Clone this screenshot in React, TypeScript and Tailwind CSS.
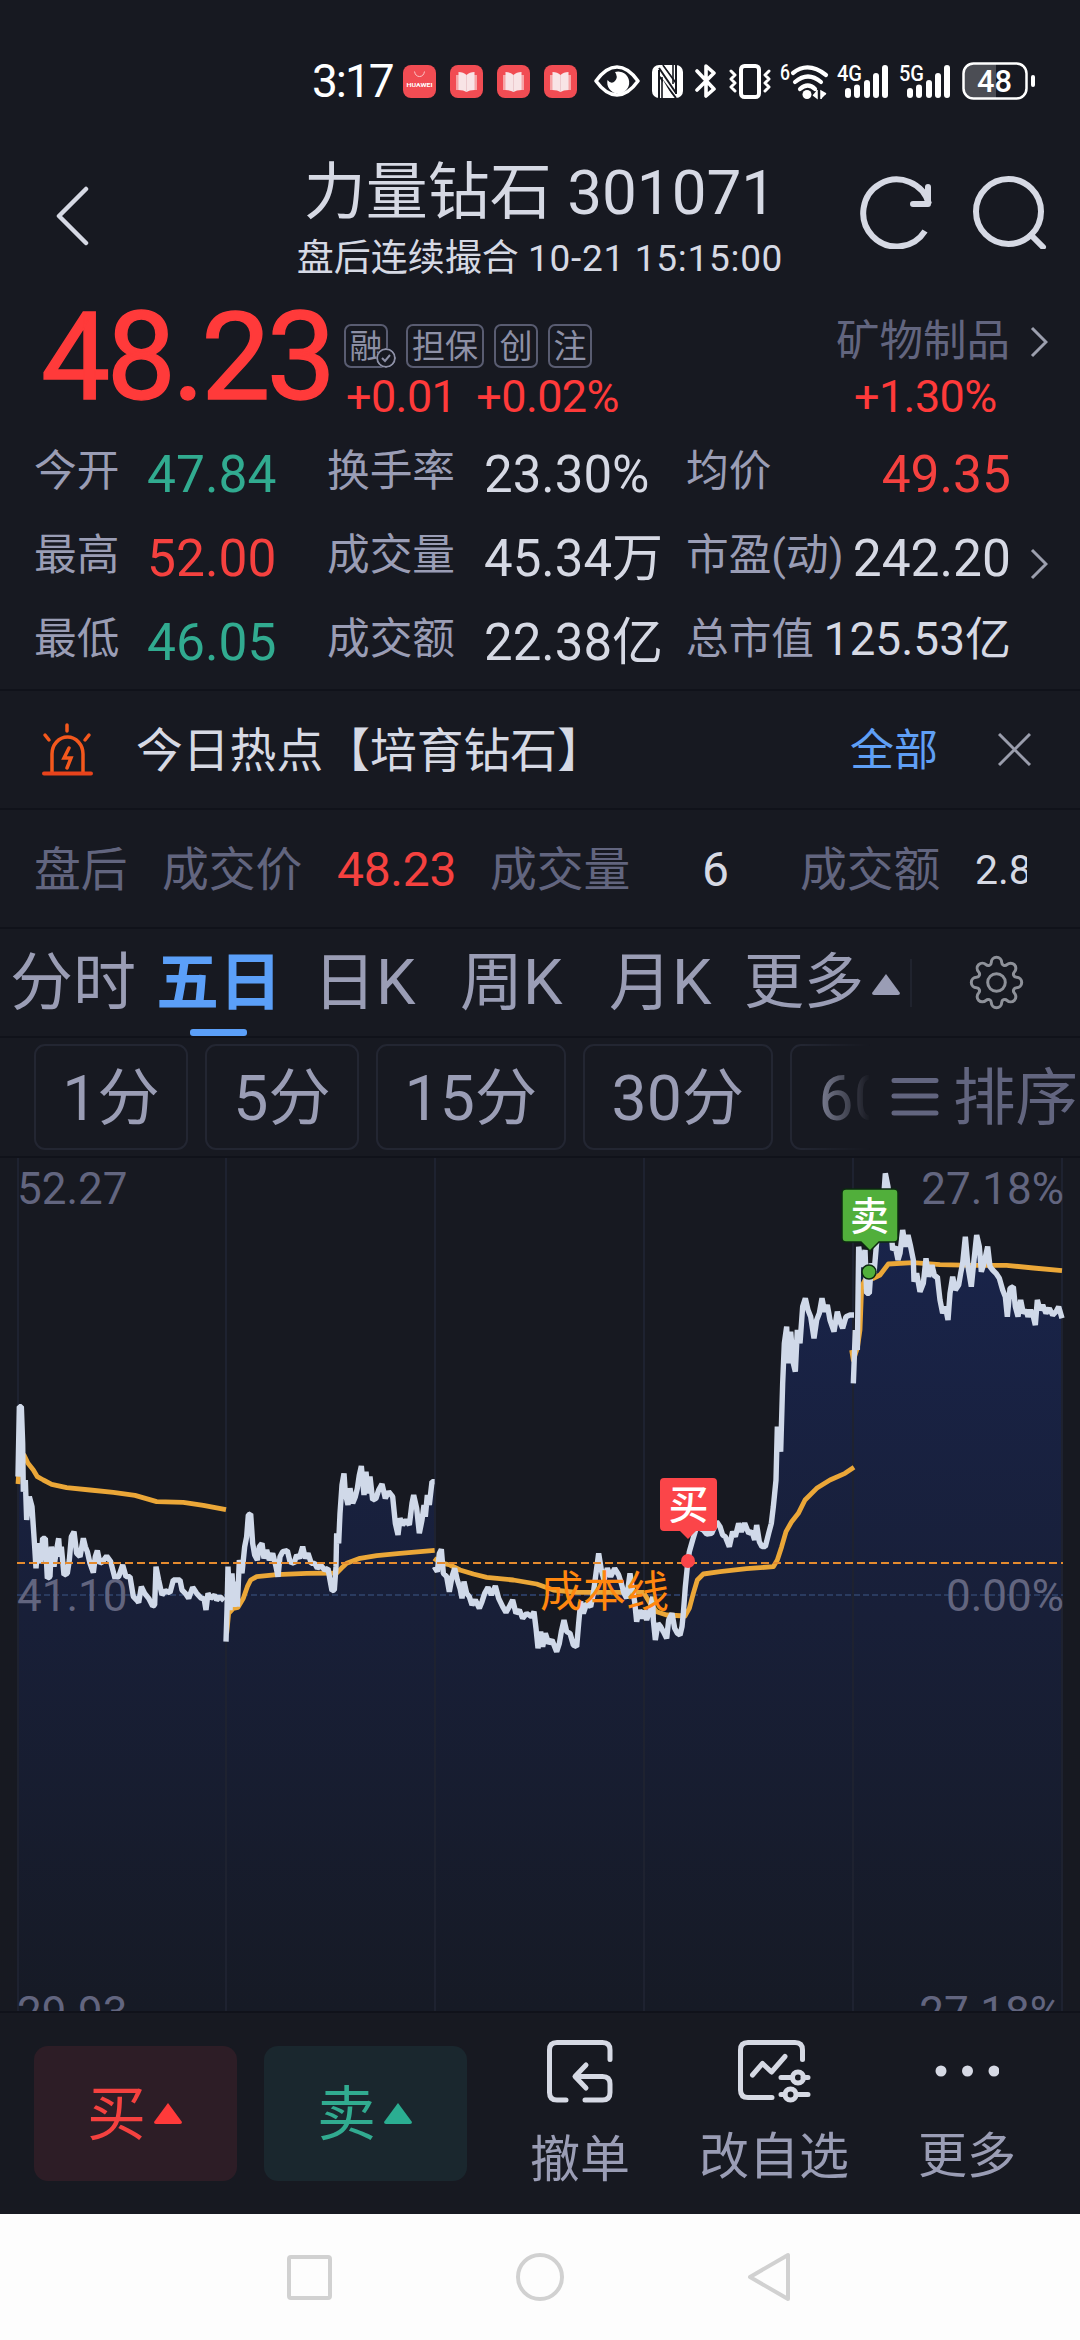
import { useState } from 'react';

type Session = { ox: number; oy: number; price: string; avg: string };

// five trading days, every pair is x,y in thirds of a pixel from the session origin
const sessions: Session[] = [
  {
    ox: 0,
    oy: 222,
    price:
      '54,290 58,80 64,80 68,190 70,335 76,300 80,420 88,350 96,380 104,500 108,565 114,490 122,550 128,475 136,475 142,595 150,590 154,500 162,560 168,520 176,475 180,530 184,500 192,585 202,580 208,540 214,470 222,455 230,520 240,530 250,475 256,500 262,515 270,550 280,578 286,530 292,512 300,550 308,545 320,528 332,545 345,595 356,590 368,555 378,590 390,590 400,650 410,660 416,668 424,620 434,640 446,655 458,678 464,675 468,560 476,600 486,645 496,632 510,638 520,600 532,600 540,600 546,630 556,640 566,655 578,622 590,640 604,655 612,655 618,690 624,640 632,655 644,645 650,660 660,650 672,662',
    avg: '54,312 60,222 72,225 84,250 100,270 112,290 130,300 155,313 200,323 270,330 340,337 405,346 470,365 550,367 610,376 678,389',
  },
  {
    ox: 0,
    oy: 222,
    price:
      '678,785 681,690 684,560 690,690 696,580 702,680 708,605 712,680 718,540 726,580 734,500 740,470 745,405 752,402 758,490 764,525 772,540 778,500 786,490 792,535 800,510 808,540 818,520 828,560 834,590 840,530 848,515 862,512 870,545 882,550 890,525 898,535 908,500 916,535 924,520 934,550 944,550 952,565 962,555 974,570 984,565 990,600 996,632 1003,630 1008,560 1010,460 1016,490 1020,400 1026,315 1032,280 1036,340 1044,375 1050,325 1058,370 1066,350 1072,325 1078,285 1084,258 1092,345 1098,275 1104,340 1110,290 1118,360 1128,355 1136,330 1146,312 1156,355 1166,335 1178,350 1186,430 1194,465 1200,415 1208,435 1218,420 1228,435 1236,370 1241,345 1250,385 1258,460 1266,420 1272,375 1276,410 1282,345 1288,375 1296,305 1304,305',
    avg: '680,760 686,700 700,685 714,682 730,655 742,620 752,600 770,590 830,584 920,580 1010,579 1024,565 1040,550 1080,535 1130,527 1200,520 1304,511',
  },
  {
    ox: 420,
    oy: 222,
    price:
      '43,560 52,575 58,520 64,508 70,580 80,590 88,635 96,590 104,565 112,600 120,625 126,655 132,605 140,640 148,650 156,675 166,660 178,685 186,665 194,640 204,622 214,645 226,618 236,655 248,680 258,697 268,680 278,660 288,700 298,690 308,715 320,700 334,710 342,695 348,745 354,805 362,755 368,800 376,760 386,790 396,780 410,815 418,790 424,755 432,720 440,755 450,760 460,795 470,800 476,730 482,665 490,700 500,670 512,680 520,640 528,580 536,520 544,570 552,600 562,565 572,590 584,565 596,585 604,610 612,640 620,655 630,580 636,620 644,665 650,725 658,690 664,715 672,690',
    avg: '42,535 60,548 90,555 120,570 160,582 200,592 280,600 350,612 400,630 470,637 672,637',
  },
  {
    ox: 420,
    oy: 222,
    price:
      '672,690 680,720 690,690 698,650 700,720 706,780 714,730 722,740 730,755 740,775 746,720 756,700 764,745 772,760 780,765 786,740 790,700 796,620 802,560 808,515 818,480 830,440 850,450 860,462 875,460 890,425 900,440 908,465 916,470 928,500 938,455 946,470 956,430 964,455 974,430 986,460 996,455 1004,480 1010,435 1018,485 1026,500 1036,500 1046,460 1054,430 1060,380 1068,300 1072,140 1082,215 1088,10 1093,-110 1100,-160 1104,-50 1112,-145 1120,-50 1126,-25 1132,-150 1140,-110 1148,-220 1156,-245 1164,-210 1172,-190 1182,-125 1190,-180 1198,-200 1206,-245 1214,-205 1222,-225 1230,-180 1242,-145 1252,-205 1260,-175 1268,-155 1278,-190 1290,-195 1302,-195',
    avg: '672,640 690,670 710,695 740,705 795,708 808,685 820,640 832,600 850,582 900,575 980,566 1060,560 1072,540 1085,500 1098,455 1115,425 1135,400 1155,360 1190,325 1230,300 1275,280 1302,262',
  },
  {
    ox: 740,
    oy: -8,
    price:
      '340,700 346,540 352,600 356,290 365,350 375,300 380,430 388,430 394,340 402,370 408,300 416,200 425,230 436,70 444,110 450,200 458,300 466,290 474,330 480,310 488,240 496,290 504,255 512,290 520,330 522,395 530,370 540,425 550,400 558,325 566,380 576,345 584,380 592,380 600,450 608,490 616,470 624,510 630,430 638,380 646,420 656,405 662,370 668,340 676,260 684,350 694,410 702,330 710,255 718,290 724,365 732,340 743,290 750,350 758,360 768,370 778,385 788,420 796,440 802,500 810,415 820,410 826,470 834,500 842,450 850,490 858,480 864,500 872,480 880,500 886,525 892,450 900,480 908,465 918,490 928,475 938,495 948,485 956,470 966,505',
    avg: '335,600 340,630 352,595 360,540 365,410 375,390 400,385 420,375 445,342 520,338 600,344 700,346 800,346 880,354 966,362',
  },
];

function toPoints(s: Session, line: string) {
  return line.split(' ').map((pair) => {
    const [x, y] = pair.split(',').map(Number);
    return [s.ox + x / 3, s.oy + y / 3];
  });
}

const gridX = [18, 226, 435, 644, 853, 1062];
const periods = ['1分', '5分', '15分', '30分'];

export default function App() {
  const [tab, setTab] = useState('五日');

  return (
    <div className="flex h-[2340px] w-[1080px] flex-col overflow-hidden whitespace-nowrap bg-[#171921] font-[Roboto,'Noto_Sans_CJK_SC',sans-serif] leading-none text-[#d6d9e4]">
      <StatusBar />
      <Header />
      <PriceBlock />
      <Stats />
      <HotTopic />
      <AfterHours />
      <Tabs tab={tab} onChange={setTab} />
      <PeriodBar />
      <Chart />
      <BottomBar />
      <NavBar />
    </div>
  );
}

function BookIcon() {
  return (
    <svg width="33" height="33" viewBox="0 0 33 33">
      <rect width="33" height="33" rx="8" fill="#f14c53" />
      <path d="M6 10h21v15H6z" fill="#f6a4a6" />
      <path d="M8.500 7q5 0 8 3q3-3 8-3v18q-5 0-8 2q-3-2-8-2z" fill="#f8e4e6" />
      <path d="M16.500 10v17" stroke="#eccace" strokeWidth="1" />
    </svg>
  );
}

function Signal({ label }: { label: string }) {
  return (
    <svg className="overflow-visible" width="50" height="35" viewBox="0 0 50 35" fill="#fff">
      <text x="-1" y="16.500" fontSize="21.500" fontWeight="500" textLength="25" lengthAdjust="spacingAndGlyphs">{label}</text>
      <rect x="7" y="24" width="6" height="10" rx="3" />
      <rect x="16" y="20.500" width="6" height="13.500" rx="3" />
      <rect x="26" y="16" width="6" height="18" rx="3" />
      <rect x="35" y="9" width="6" height="25" rx="3" />
      <rect x="44" y="1" width="6" height="33" rx="3" />
    </svg>
  );
}

function StatusBar() {
  return (
    <div className="flex h-[140px] shrink-0 items-center pt-[22px] pl-[312px] text-white">
      <span className="w-[91px] text-[46px] tracking-[-2px]">3:17</span>
      <div className="flex gap-[14px]">
        <svg className="overflow-visible" width="33" height="33" viewBox="0 0 33 33">
          <rect width="33" height="33" rx="8" fill="#f14c53" />
          <path d="M11.500 6.500q1 5 5 5t5-5" fill="none" stroke="#fbc5c7" strokeWidth="1" />
          <text x="3.500" y="22" fontSize="6" fontWeight="700" fill="#fff" textLength="26" lengthAdjust="spacingAndGlyphs">HUAWEI</text>
        </svg>
        <BookIcon />
        <BookIcon />
        <BookIcon />
      </div>
      <svg className="ml-[17px]" width="46" height="32" viewBox="0 0 46 32">
        <path d="M2 16Q12 2 23 2t21 14Q34 30 23 30T2 16z" fill="none" stroke="#fff" strokeWidth="3.500" strokeLinejoin="round" />
        <path d="M21 7a11 11 0 1 1-7.500 8q4 5 7.500 1t0-9z" fill="#fff" />
      </svg>
      <svg className="ml-3" width="31" height="33" viewBox="0 0 31 33">
        <rect width="31" height="33" rx="7" fill="#fff" />
        <path d="M7 33V5M7 3l17 25M24 29V0M7 11l17 22M11 0l13 18" fill="none" stroke="#171921" strokeWidth="2" />
        <path d="M11 15v16l11 3zM12 0l11 15V0z" fill="#fff" />
        <path d="M10 12v21M21 0v19" stroke="#171921" strokeWidth="1.600" />
      </svg>
      <svg className="ml-3" width="22" height="36" viewBox="0 0 22 36">
        <path d="M2 8l17 18-8 7V3l8 7L2 27" fill="none" stroke="#fff" strokeWidth="3.600" strokeLinejoin="round" strokeLinecap="round" />
      </svg>
      <svg className="ml-3" width="42" height="35" viewBox="0 0 42 35" fill="none" stroke="#fff">
        <rect x="12" y="2" width="18" height="31" rx="3.500" strokeWidth="4" />
        <path d="M2 7l4 4-4 4 4 4-4 4 4 4M40 7l-4 4 4 4-4 4 4 4-4 4" strokeWidth="3" strokeLinejoin="round" strokeLinecap="round" />
      </svg>
      <svg className="ml-[9px] overflow-visible" width="49" height="37" viewBox="0 0 49 37">
        <text x="0" y="17" fontSize="21.500" fontWeight="500" fill="#fff" textLength="10" lengthAdjust="spacingAndGlyphs">6</text>
        <path d="M13 10Q28-2 46 12M15 19q13-11 26 0M20 26q8-7 15 0" fill="none" stroke="#fff" strokeWidth="4.200" strokeLinecap="round" />
        <circle cx="27" cy="31.500" r="4.500" fill="#fff" />
        <path d="M37 27v8l-4-3M41 36v-8l5 3" fill="#fff" stroke="#fff" strokeWidth="1.500" />
      </svg>
      <div className="ml-[9px] flex gap-3">
        <Signal label="4G" />
        <Signal label="5G" />
      </div>
      <svg className="ml-3" width="74" height="38" viewBox="0 0 74 38">
        <path d="M12 2h22v34H12A10 10 0 0 1 2 26V12A10 10 0 0 1 12 2z" fill="#4b4d54" />
        <rect x="1.500" y="1.500" width="63" height="35" rx="10" fill="none" stroke="#fff" strokeWidth="2.500" />
        <rect x="69" y="13" width="4" height="12" rx="2" fill="#fff" />
        <text x="32.500" y="30" fontSize="32" fontWeight="500" fill="#fff" textAnchor="middle" textLength="35" lengthAdjust="spacingAndGlyphs">48</text>
      </svg>
    </div>
  );
}

function Header() {
  return (
    <div className="flex h-[156px] shrink-0">
      <div className="w-[220px] pl-[55px] pt-[46px]">
        <svg width="34" height="60" viewBox="0 0 34 60" fill="none" stroke="currentColor" strokeWidth="4.500">
          <path d="M31 3L4 30l27 27" strokeLinecap="round" strokeLinejoin="round" />
        </svg>
      </div>
      <div className="flex flex-1 flex-col items-center pt-[22px]">
        <h1 className="text-[62px]">力量钻石 301071</h1>
        <p className="mt-[16px] text-[37px]">
          盘后连续撮合 <span className="tracking-[0.7px]">10-21 15:15:00</span>
        </p>
      </div>
      <div className="flex w-[220px] pt-[35px]">
        <svg width="220" height="74" viewBox="860 175 220 74" fill="none" stroke="currentColor" strokeWidth="6">
          <path d="M925 231A33.500 33.500 0 1 1 929 204" />
          <path d="M928 187v17h-15" strokeLinecap="round" strokeLinejoin="round" />
          <circle cx="1008.500" cy="211.500" r="32.500" />
          <path d="M1031 235l12 12" strokeLinecap="round" />
        </svg>
      </div>
    </div>
  );
}

function Tag({ text }: { text: string }) {
  return (
    <span className={`flex h-[44px] items-center justify-center rounded-[7px] border-2 border-[#595c71] text-[33px] text-[#8d90a6] ${text.length > 1 ? 'w-[78px]' : 'w-[44px]'}`}>
      {text}
    </span>
  );
}

function Chevron() {
  return (
    <svg width="18" height="32" viewBox="0 0 18 32" fill="none" stroke="#9c9fae" strokeWidth="3">
      <path d="M2 2l14 14L2 30" />
    </svg>
  );
}

function PriceBlock() {
  return (
    <div className="flex h-[132px] shrink-0 pl-[41px] text-[#ff3a3a]">
      <span className="w-[303px] text-[123px] tracking-[-3.500px] [-webkit-text-stroke:1.500px_#ff3a3a]">48.23</span>
      <div className="pt-[28px]">
        <div className="flex gap-[10px]">
          <div className="relative mr-[8px]">
            <Tag text="融" />
            <svg className="absolute -right-[8px] bottom-0 rounded-full bg-[#171921]" width="20" height="20" viewBox="0 0 20 20" fill="none" stroke="#8d90a6" strokeWidth="2">
              <circle cx="10" cy="10" r="9" />
              <path d="M6 10l3 3 5-6" />
            </svg>
          </div>
          <Tag text="担保" />
          <Tag text="创" />
          <Tag text="注" />
        </div>
        <div className="mt-[6px] flex gap-[20px] pl-[2px] text-[45px] tracking-[-0.600px]">
          <span>+0.01</span>
          <span>+0.02%</span>
        </div>
      </div>
      <div className="ml-auto mr-[32px] pt-[24px]">
        <div className="flex items-center gap-[20px] text-[43.500px] text-[#62657f]">
          <span>矿物制品</span>
          <Chevron />
        </div>
        <div className="mt-[10px] pl-[18px] text-[45px] tracking-[-0.600px]">+1.30%</div>
      </div>
    </div>
  );
}

function StatLabel({ text, className }: { text: string; className?: string }) {
  return <span className={`text-[42.700px] text-[#9a9db5] ${className ?? ''}`}>{text}</span>;
}

function Stats() {
  const rows = [
    { a: '今开', av: '47.84', up: false, b: '换手率', bv: '23.30%', c: '均价', cv: '49.35' },
    { a: '最高', av: '52.00', up: true, b: '成交量', bv: '45.34万', c: '市盈(动)', cv: '242.20' },
    { a: '最低', av: '46.05', up: false, b: '成交额', bv: '22.38亿', c: '总市值', cv: '125.53亿' },
  ];
  return (
    <div className="flex h-[263px] shrink-0 flex-col border-b-2 border-[#10121a] pt-px">
      {rows.map((r, i) => (
        <div key={r.a} className="flex h-[84px] items-center pl-[34px] pr-[32px]">
          <StatLabel text={r.a} className="w-[113px]" />
          <span className={`w-[180px] pt-[7px] text-[51.500px] ${r.up ? 'text-[#f5413f]' : 'text-[#31ab90]'}`}>{r.av}</span>
          <StatLabel text={r.b} className="w-[157px]" />
          <span className="w-[202px] pt-[7px] text-[51px]">{r.bv}</span>
          <StatLabel text={r.c} />
          <span className={`ml-auto ${i === 2 ? 'text-[46px]' : 'pt-[7px] text-[51.500px]'} ${i === 0 ? 'text-[#f5413f]' : ''}`}>{r.cv}</span>
          <div className="ml-[19px] w-[18px] pt-[18px]">{i === 1 && <Chevron />}</div>
        </div>
      ))}
    </div>
  );
}

function HotTopic() {
  return (
    <div className="flex h-[119px] shrink-0 items-center border-b-2 border-[#10121a] pl-[42px] pr-[49px]">
      <svg className="mr-[43px]" width="51" height="54" viewBox="0 0 51 54" fill="none" stroke="#f4581d" strokeWidth="3.500" strokeLinecap="round">
        <path d="M25 2v6M3 12l4 5M47 12l-4 5" />
        <path d="M10 49V31a15.500 17 0 0 1 31 0v18" />
        <path d="M2 50.500h47" stroke="#e8431c" strokeWidth="4" />
        <path d="M27 25l-5 10h7l-4 10" />
      </svg>
      <span className="pt-[3px] text-[46.800px]">今日热点【培育钻石】</span>
      <span className="ml-auto pt-[3px] text-[44px] text-[#5f9ff5]">全部</span>
      <svg className="ml-[60px]" width="33" height="33" viewBox="0 0 33 33" stroke="#9a9dac" strokeWidth="3">
        <path d="M1 1l31 31M32 1L1 32" />
      </svg>
    </div>
  );
}

function AfterHours() {
  return (
    <div className="flex h-[119px] shrink-0 items-center border-b-2 border-[#10121a] pl-[34px] pt-[3px] text-[46.800px] text-[#62657f]">
      <span className="w-[128px]">盘后</span>
      <span className="w-[175px]">成交价</span>
      <span className="w-[153px] text-[48px] tracking-[-0.300px] text-[#f5413f]">48.23</span>
      <span className="w-[212px]">成交量</span>
      <span className="w-[98px] text-[48px] text-[#d6d9e4]">6</span>
      <span className="w-[175px]">成交额</span>
      <span className="w-[52px] overflow-hidden text-[41px] text-[#d6d9e4]">2.81</span>
    </div>
  );
}

function Triangle({ color }: { color: string }) {
  return (
    <svg width="28" height="21" viewBox="0 0 28 21" fill={color}>
      <path d="M14 0l14 19q0 2-2 2H2q-2 0-2-2z" />
    </svg>
  );
}

function Tabs({ tab, onChange }: { tab: string; onChange: (v: string) => void }) {
  const items = [
    { name: '分时', width: 'w-[146px]' },
    { name: '五日', width: 'w-[157px]' },
    { name: '日K', width: 'w-[147px]' },
    { name: '周K', width: 'w-[149px]' },
    { name: '月K', width: 'w-[135px]' },
  ];
  return (
    <div className="flex h-[109px] shrink-0 items-center border-b-2 border-[#10121a] pl-[10px] text-[63px] text-[#9a9db5]">
      {items.map((t) => (
        <button
          key={t.name}
          onClick={() => onChange(t.name)}
          className={`relative flex h-full items-center text-left ${t.width} ${tab === t.name ? 'font-bold text-[#5b9ff8]' : ''}`}
        >
          <span>{t.name}</span>
          {tab === t.name && <span className="absolute bottom-0 left-[34px] h-[7px] w-[57px] rounded-[3px] bg-[#5b9ff8]" />}
        </button>
      ))}
      <span className="text-[60px]">更多</span>
      <div className="ml-[8px] pt-1">
        <Triangle color="#9a9db5" />
      </div>
      <div className="ml-[10px] h-[48px] w-[2px] bg-[#20232e]" />
      <svg className="ml-[56px]" width="57" height="57" viewBox="-28.500 -28.500 57 57" fill="none" stroke="#8e9199" strokeWidth="3" strokeLinejoin="round">
        <path d="M-5.200-20A5.200 5.200 0 0 1 5.200-20A3.100 3.100 0 0 0 10.460-17.820A5.200 5.200 0 0 1 17.820-10.460A3.100 3.100 0 0 0 20-5.200A5.200 5.200 0 0 1 20 5.200A3.100 3.100 0 0 0 17.820 10.460A5.200 5.200 0 0 1 10.460 17.820A3.100 3.100 0 0 0 5.200 20A5.200 5.200 0 0 1-5.200 20A3.100 3.100 0 0 0-10.460 17.820A5.200 5.200 0 0 1-17.820 10.460A3.100 3.100 0 0 0-20 5.200A5.200 5.200 0 0 1-20-5.200A3.100 3.100 0 0 0-17.820-10.460A5.200 5.200 0 0 1-10.460-17.820A3.100 3.100 0 0 0-5.200-20z" />
        <circle r="8.800" />
      </svg>
    </div>
  );
}

function PeriodBar() {
  return (
    <div className="flex h-[120px] shrink-0 items-center border-b-2 border-[#10121a] pl-[34px] text-[62.500px] text-[#9a9db5]">
      <div className="flex w-[836px] shrink-0 gap-[17px] overflow-hidden [mask-image:linear-gradient(to_right,#000_770px,transparent_836px)]">
        {periods.map((p) => (
          <span
            key={p}
            className={`flex h-[106px] shrink-0 items-center justify-center rounded-[11px] border-2 border-[#232632] pt-1 ${p.length === 2 ? 'w-[154px]' : 'w-[190px]'}`}
          >
            {p}
          </span>
        ))}
        <span className="flex h-[106px] w-[190px] shrink-0 items-center justify-center rounded-[11px] border-2 border-[#232632] pt-1">60分</span>
      </div>
      <svg className="ml-[20px] shrink-0" width="50" height="40" viewBox="0 0 50 40" stroke="#62657f" strokeWidth="5" strokeLinecap="round">
        <path d="M4 3.500h42M4 19h42M4 36h42" />
      </svg>
      <span className="ml-[13px] pt-1 text-[#62657f]">排序</span>
    </div>
  );
}

function Chart() {
  return (
    <svg className="h-[853px] w-[1080px] shrink-0" viewBox="0 0 1080 853">
      <defs>
        <linearGradient id="area" gradientUnits="userSpaceOnUse" x1="0" y1="60" x2="0" y2="853">
          <stop offset="0" stopColor="#19244b" />
          <stop offset="0.500" stopColor="#181f38" />
          <stop offset="1" stopColor="#161a25" />
        </linearGradient>
      </defs>

      {sessions.map((s, i) => {
        const pts = toPoints(s, s.price);
        const first = pts[0][0];
        const last = i < 4 ? gridX[i + 1] : 1062;
        return <polygon key={i} fill="url(#area)" points={`${first},853 ${pts.join(' ')} ${last},${pts[pts.length - 1][1]} ${last},853`} />;
      })}

      {gridX.map((x) => (
        <line key={x} x1={x} x2={x} y1="0" y2="853" stroke="#1e2230" strokeWidth="2" />
      ))}
      <line x1="17" x2="1063" y1="437" y2="437" stroke="#2a3b60" strokeWidth="2" strokeDasharray="6 3" />

      {sessions.map((s, i) => (
        <g key={i} fill="none">
          <polyline points={toPoints(s, s.avg).join(' ')} stroke="#eba738" strokeWidth="4.800" strokeLinejoin="round" />
          <polyline points={toPoints(s, s.price).join(' ')} stroke="#d0d9e9" strokeWidth="5.400" strokeLinejoin="bevel" />
        </g>
      ))}
      <line x1="17" x2="1063" y1="405" y2="405" stroke="#e58b2e" strokeWidth="2.200" strokeDasharray="8 4" />

      <g fill="#62657f" fontSize="44">
        <text x="17" y="46">52.27</text>
        <text x="17" y="453">41.10</text>
        <text x="17" y="870">29.93</text>
        <text x="1064" y="46" textAnchor="end">27.18%</text>
        <text x="1064" y="453" textAnchor="end">0.00%</text>
        <text x="1062" y="870" textAnchor="end">27.18%</text>
      </g>
      <text x="540" y="449" fontSize="43" fill="#ff870f">成本线</text>

      <path d="M664 320h49q4 0 4 4v45q0 4-4 4h-17l-8 8-8-8h-16q-4 0-4-4v-45q0-4 4-4z" fill="#fb4549" />
      <text x="688.500" y="361" fontSize="40" fontWeight="500" fill="#fff" textAnchor="middle">买</text>
      <circle cx="688" cy="403" r="7" fill="#fb4549" />

      <path d="M846 31h48q4 0 4 4v45q0 4-4 4h-15l-9 9-9-9h-15q-4 0-4-4V35q0-4 4-4z" fill="#51af3b" stroke="#0d2a10" strokeWidth="1.500" />
      <text x="869.500" y="72" fontSize="39" fontWeight="500" fill="#fff" textAnchor="middle">卖</text>
      <circle cx="869" cy="114" r="7" fill="#51b03b" stroke="#0d2a10" strokeWidth="1.500" />
    </svg>
  );
}

function BottomBar() {
  return (
    <div className="flex h-[203px] shrink-0 border-t-2 border-[#10121a] pl-[34px] text-[#9a9db5]">
      <button className="mt-[33px] flex h-[135px] w-[203px] items-center justify-center gap-[8px] rounded-[14px] bg-[#2d1d26] pr-[2px] text-[59px] text-[#f5413f]">
        <span className="pt-[2px]">买</span>
        <Triangle color="#ff3a3a" />
      </button>
      <button className="ml-[27px] mt-[33px] flex h-[135px] w-[203px] items-center justify-center gap-[8px] rounded-[14px] bg-[#1a272e] pr-[2px] text-[59px] text-[#31ab90]">
        <span className="pt-[2px]">卖</span>
        <Triangle color="#2bae92" />
      </button>
      <div className="ml-[50px] flex w-[126px] flex-col items-center pt-[25px] text-[50px]">
        <svg width="70" height="66" viewBox="546 2038 70 66" fill="none" stroke="#d6d9e4" strokeWidth="5" strokeLinecap="round" strokeLinejoin="round">
          <path d="M611 2059.500V2050q0-7.500-7.500-7.500H558q-7.500 0-7.500 7.500v42.500q0 7.500 7.500 7.500h9" />
          <path d="M586 2100h17.500q7.500 0 7.500-7.500V2084q0-7.500-7.500-7.500H577M587 2065l-11 11.500 11 11.500" />
        </svg>
        <span className="mt-[31px]">撤单</span>
      </div>
      <div className="ml-[48px] flex w-[166px] flex-col items-center pt-[25px] text-[50px]">
        <svg width="76" height="66" viewBox="736 2038 76 66" fill="none" stroke="#d6d9e4" strokeWidth="5" strokeLinecap="round" strokeLinejoin="round">
          <path d="M802.500 2059.500V2050q0-7.500-7.500-7.500H748q-7.500 0-7.500 7.500v40q0 7.500 7.500 7.500h24" />
          <path d="M752.500 2075l10-11.500 9 8.500 13.500-15.500" />
          <path d="M781 2077.500h11M803 2077.500h5M781 2094.500h4M797 2094.500h11" />
          <circle cx="798" cy="2077.500" r="5.500" />
          <circle cx="790.500" cy="2094.500" r="5.500" />
        </svg>
        <span className="mt-[28px]">改自选</span>
      </div>
      <div className="ml-[45px] flex w-[130px] flex-col items-center pt-[25px] text-[49px]">
        <svg width="64" height="66" viewBox="933 2038 64 66" fill="#d6d9e4">
          <circle cx="939" cy="2071" r="5.500" />
          <circle cx="965.500" cy="2071" r="5.500" />
          <circle cx="992" cy="2071" r="5.500" />
        </svg>
        <span className="mt-[28px]">更多</span>
      </div>
    </div>
  );
}

function NavBar() {
  return (
    <div className="flex flex-1 items-center justify-center bg-[#fdfdfd]">
      <svg width="510" height="52" viewBox="285 2251 510 52" fill="none" stroke="#d1d1d1" strokeWidth="4">
        <rect x="289" y="2257" width="41" height="41" rx="2" />
        <circle cx="540" cy="2277" r="22" />
        <path d="M788 2255v44l-38-22z" strokeLinejoin="round" />
      </svg>
    </div>
  );
}
